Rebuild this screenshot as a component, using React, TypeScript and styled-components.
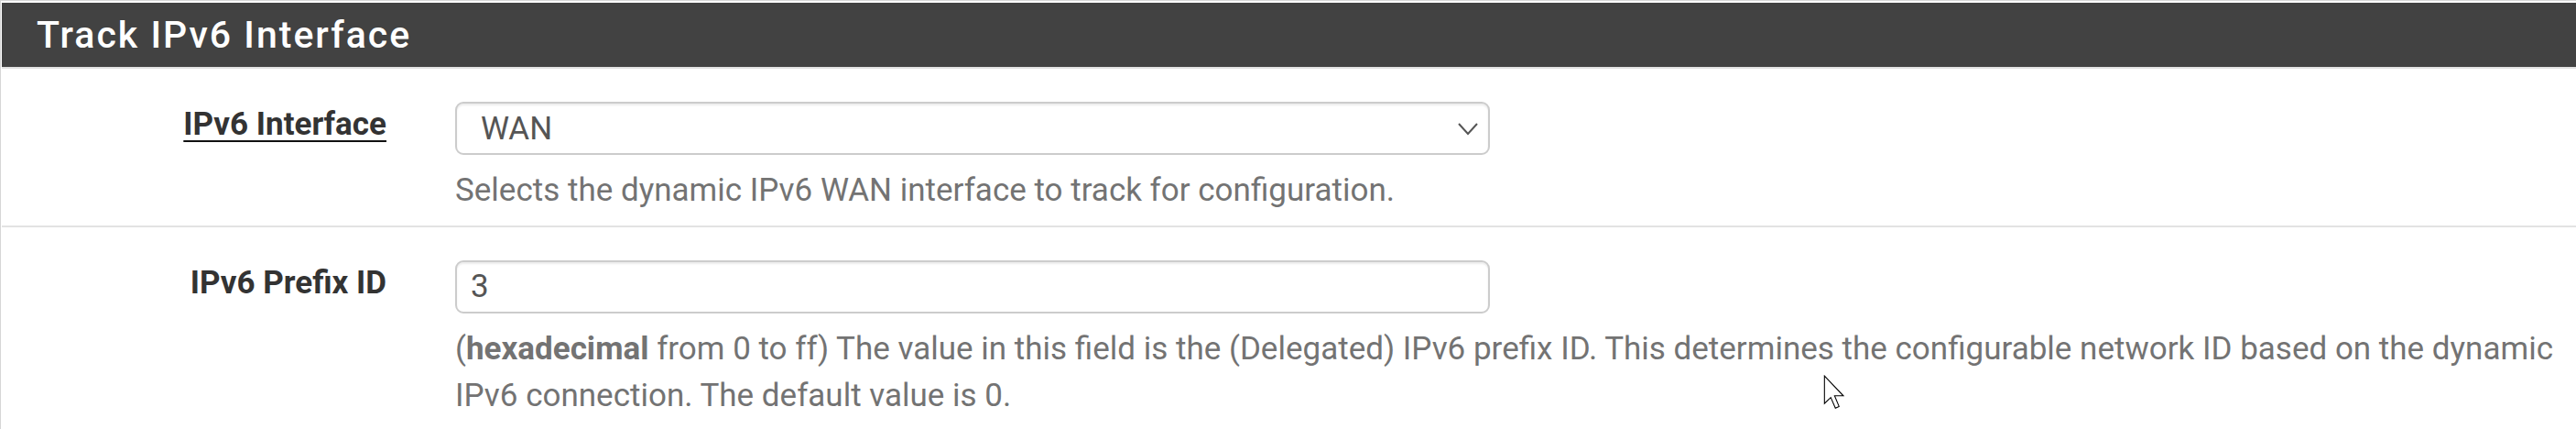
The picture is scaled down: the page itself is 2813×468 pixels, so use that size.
import React from "react";
import styled, { createGlobalStyle, css } from "styled-components";

const GlobalStyle = createGlobalStyle`
  html, body {
    margin: 0;
    padding: 0;
    background: #ffffff;
  }
  body {
    font-family: Roboto, "Liberation Sans", Arial, sans-serif;
    -webkit-font-smoothing: antialiased;
  }
`;

const Panel = styled.section`
  position: relative;
  box-sizing: border-box;
  width: 2813px;
  height: 468px;
  overflow: hidden;
  background: #ffffff;
  border-top: 1px solid #d6d6d6;
  border-left: 1px solid #d6d6d6;
  padding: 2px 0 0 1px;
`;

const Heading = styled.h2`
  margin: 0;
  box-sizing: border-box;
  height: 72px;
  padding-left: 38px;
  background: #424242;
  border-bottom: 2px solid #e2e2e2;
  color: #ffffff;
  font-family: Roboto, "Liberation Sans", sans-serif;
  font-weight: 500;
  font-size: 41px;
  line-height: 70px;
  letter-spacing: 2px;
`;

const Row = styled.div`
  display: grid;
  grid-template-columns: 420px 1fr;
  column-gap: 75px;
  padding: 36px 4px 12px 0;
  border-bottom: 2px solid #e3e3e3;

  &:last-child {
    border-bottom: none;
  }
`;

const Label = styled.label<{ $help?: boolean }>`
  justify-self: end;
  align-self: start;
  font-family: Roboto, "Liberation Sans", sans-serif;
  font-weight: 700;
  font-size: 35px;
  line-height: 50px;
  color: #333333;
  ${(p) =>
    p.$help &&
    css`
      text-decoration: underline;
      text-decoration-color: #111111;
      text-decoration-thickness: 2px;
      text-underline-offset: 6px;
    `}
`;

const Field = styled.div`
  display: flex;
  flex-direction: column;
  align-items: flex-start;
  min-width: 0;
`;

const SelectWrap = styled.div`
  position: relative;
  width: 1130px;
  height: 58px;
`;

const controlBase = css`
  box-sizing: border-box;
  width: 1130px;
  height: 58px;
  margin: 0;
  border: 2px solid #cccccc;
  border-radius: 9px;
  background: #ffffff;
  box-shadow: inset 0 2px 2px rgba(0, 0, 0, 0.075);
  font-family: Roboto, "Liberation Sans", sans-serif;
  font-weight: 400;
  font-size: 35px;
  color: #555555;
  outline: none;
`;

const Select = styled.select`
  ${controlBase};
  appearance: none;
  -webkit-appearance: none;
  padding: 0 60px 0 26px;
`;

const Chevron = styled.svg`
  position: absolute;
  right: 12px;
  top: 22px;
  width: 24px;
  height: 15px;
  pointer-events: none;
`;

const TextInput = styled.input`
  ${controlBase};
  padding: 0 15px;
`;

const Help = styled.p`
  margin: 13px 0 0;
  font-family: Roboto, "Liberation Sans", sans-serif;
  font-weight: 400;
  font-size: 35px;
  line-height: 51.5px;
  color: #737373;

  strong {
    font-weight: 700;
  }
`;

const Cursor = styled.svg`
  position: absolute;
  left: 1990px;
  top: 408px;
  width: 24px;
  height: 38px;
  pointer-events: none;
`;

export default function App() {
  return (
    <>
      <GlobalStyle />
      <Panel>
        <Heading>Track IPv6 Interface</Heading>

        <Row>
          <Label $help htmlFor="track6-interface">
            IPv6 Interface
          </Label>
          <Field>
            <SelectWrap>
              <Select id="track6-interface" defaultValue="wan">
                <option value="wan">WAN</option>
              </Select>
              <Chevron viewBox="0 0 24 15">
                <polyline
                  points="2,2 12,13 22,2"
                  fill="none"
                  stroke="#555555"
                  strokeWidth="2"
                />
              </Chevron>
            </SelectWrap>
            <Help>Selects the dynamic IPv6 WAN interface to track for configuration.</Help>
          </Field>
        </Row>

        <Row>
          <Label htmlFor="track6-prefix-id">IPv6 Prefix ID</Label>
          <Field>
            <TextInput id="track6-prefix-id" type="text" defaultValue="3" />
            <Help>
              (<strong>hexadecimal</strong> from 0 to ff) The value in this field is the
              (Delegated) IPv6 prefix ID. This determines the configurable network ID
              based on the dynamic IPv6 connection. The default value is 0.
            </Help>
          </Field>
        </Row>

        <Cursor viewBox="0 0 13 21">
          <path
            d="M0.6,0.6 V17.2 L4.4,13.6 L7.2,20 L9.4,19 L6.7,12.6 H12 Z"
            fill="#ffffff"
            stroke="#000000"
            strokeWidth="0.6"
            strokeLinejoin="miter"
          />
        </Cursor>
      </Panel>
    </>
  );
}
